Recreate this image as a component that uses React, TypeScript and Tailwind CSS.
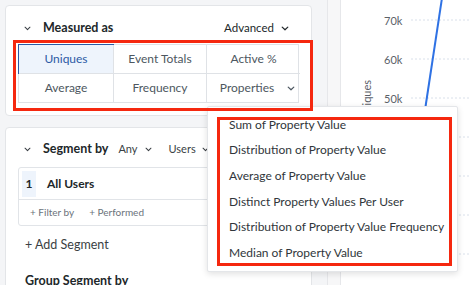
import React from "react";

const Chev = ({ className = "" }: { className?: string }) => (
  <svg viewBox="0 0 10 6" className={className} fill="none" stroke="currentColor" strokeWidth="1.5" strokeLinecap="round" strokeLinejoin="round">
    <path d="M1.5 1.2 L5 4.6 L8.5 1.2" />
  </svg>
);

export default function App() {
  const font = { fontFamily: 'Lato, "Noto Sans", sans-serif' };
  const items = [
    "Sum of Property Value",
    "Distribution of Property Value",
    "Average of Property Value",
    "Distinct Property Values Per User",
    "Distribution of Property Value Frequency",
    "Median of Property Value",
  ];
  return (
    <div className="relative flex w-[471px] h-[285px] overflow-hidden bg-white" style={font}>
      {/* left panel */}
      <div className="w-[327px] shrink-0 bg-[#f4f5f7] pl-[5px] pt-[5px] flex flex-col gap-[11px]">
        {/* card 1 */}
        <div className="shrink-0 w-[307px] h-[111px] bg-white border border-[#e3e5e8] rounded-[4px] px-[12px] pt-[12px]">
          <div className="flex items-center h-[20px]">
            <Chev className="w-[7px] h-[5px] text-[#3a3f44] ml-[6px]" />
            <span className="ml-[12px] text-[12.5px] font-bold text-[#21272a]">Measured as</span>
            <span className="ml-auto mr-[10px] flex items-center gap-[7px] text-[11.5px] text-[#21272a]">
              Advanced <Chev className="w-[8px] h-[5px]" />
            </span>
          </div>
          <div className="mt-[6px] grid grid-cols-[94px_93px_94px] grid-rows-[28px_29px] border border-[#dfe2e6] text-[12px] text-[#4d5760]">
            <div className="flex items-center justify-center bg-[#eef4fc] border border-[#2c5aa5] text-[#2c5aa5] -m-px">Uniques</div>
            <div className="flex items-center justify-center border-l border-[#dfe2e6]">Event Totals</div>
            <div className="flex items-center justify-center border-l border-[#dfe2e6]">Active %</div>
            <div className="flex items-center justify-center border-t border-[#dfe2e6]">Average</div>
            <div className="flex items-center justify-center border-t border-l border-[#dfe2e6]">Frequency</div>
            <div className="flex items-center justify-center border-t border-l border-[#dfe2e6] gap-[13px] pl-[8px]">
              Properties <Chev className="w-[8px] h-[5px]" />
            </div>
          </div>
        </div>
        {/* card 2 */}
        <div className="shrink-0 w-[307px] h-[200px] bg-white border border-[#e3e5e8] rounded-[4px] px-[12px] pt-[11px]">
          <div className="flex items-center h-[20px]">
            <Chev className="w-[7px] h-[5px] text-[#3a3f44] ml-[6px]" />
            <span className="ml-[12px] text-[12.5px] font-bold text-[#21272a]">Segment by</span>
            <span className="ml-[10px] flex items-center gap-[7px] text-[11px] text-[#3a3f44]">
              Any <Chev className="w-[7px] h-[5px]" />
            </span>
            <span className="ml-[17px] flex items-center gap-[6px] text-[11px] text-[#3a3f44]">
              Users <Chev className="w-[7px] h-[5px]" />
            </span>
          </div>
          <div className="mt-[8px] w-[290px] h-[59px] border border-[#e1e4e8] rounded-[3px] flex flex-col">
            <div className="h-[32px] flex items-center border-b border-[#e1e4e8]">
              <span className="ml-[3px] w-[14px] h-[26px] bg-[#eef4fc] flex items-center justify-center text-[12px] font-bold text-[#21272a]">1</span>
              <span className="ml-[11px] text-[12px] font-bold text-[#21272a]">All Users</span>
            </div>
            <div className="flex items-center h-[25px] text-[10px] text-[#6b737b]">
              <span className="ml-[11px]">+ Filter by</span>
              <span className="ml-[15px]">+ Performed</span>
            </div>
          </div>
          <div className="mt-[10px] ml-[7px] text-[12.5px] text-[#3a3f44]">+ Add Segment</div>
          <div className="mt-[17px] ml-[7px] text-[12.5px] font-bold text-[#21272a]">Group Segment by</div>
        </div>
      </div>
      {/* scrollbar gutter */}
      <div className="w-[14px] shrink-0 bg-[#f7f7f8] border-l border-r border-[#e6e7ea]" />
      {/* chart */}
      <div className="relative flex-1 bg-white">
        <svg className="absolute inset-0" width="130" height="285">
          {[20, 59, 98, 137, 176, 215, 254].map((y) => (
            <line key={y} x1="70" y1={y} x2="130" y2={y} stroke="#d9e0ea" strokeDasharray="2 2" strokeWidth="1" />
          ))}
          <line x1="101" y1="-2" x2="84" y2="110" stroke="#2f72e4" strokeWidth="2" />
        </svg>
        <div className="absolute left-[43px] top-[13px] text-[11px] text-[#5b6168]">70k</div>
        <div className="absolute left-[43px] top-[52px] text-[11px] text-[#5b6168]">60k</div>
        <div className="absolute left-[43px] top-[91px] text-[11px] text-[#5b6168]">50k</div>
        <div className="absolute left-[6px] top-[93px] w-[40px] h-[14px] leading-[14px] text-right text-[11px] text-[#5b6168] -rotate-90 whitespace-nowrap">
          Uniques
        </div>
      </div>

      {/* dropdown */}
      <div className="absolute left-[207px] top-[106px] w-[251px] h-[166px] bg-white border border-[#e4e6e9] rounded-[2px] shadow-[0_2px_6px_rgba(0,0,0,0.12)] pt-[5px]">
        {items.map((t) => (
          <div key={t} className="h-[25.6px] flex items-center pl-[21px] text-[12px] text-[#30363b] whitespace-nowrap">
            {t}
          </div>
        ))}
      </div>

      {/* annotations */}
      <div className="absolute left-[13px] top-[40px] w-[300px] h-[71px] border-[3px] border-[#f5280f]" />
      <div className="absolute left-[217px] top-[117px] w-[235px] h-[149px] border-[3px] border-[#f5280f]" />
    </div>
  );
}
